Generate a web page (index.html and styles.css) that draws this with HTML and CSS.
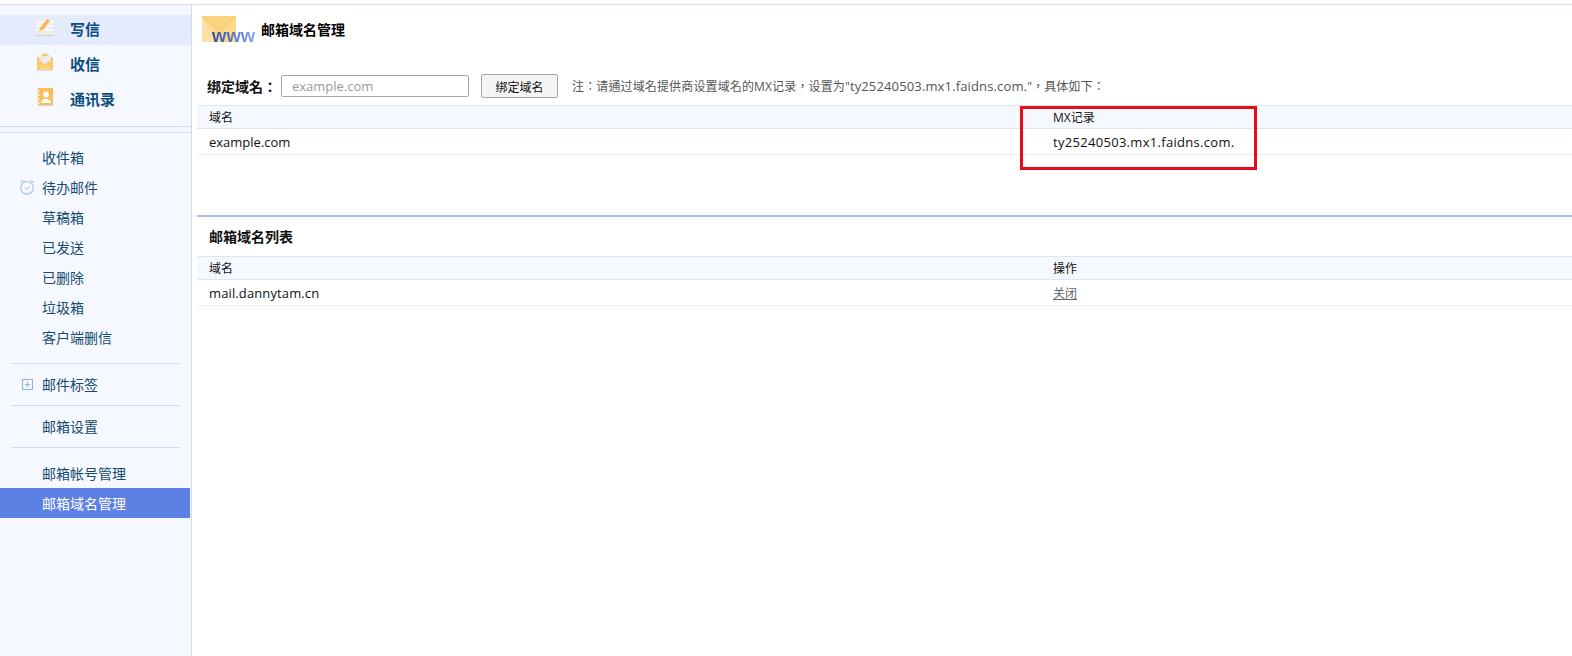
FILE: index.html
```html
<!DOCTYPE html>
<html lang="zh-CN">
<head>
<meta charset="utf-8">
<title>邮箱域名管理</title>
<link rel="stylesheet" href="styles.css">
</head>
<body>
<div class="app">
  <aside class="side">
    <nav class="main-nav">
      <a class="main-item current">
        <svg class="main-icon" viewBox="0 0 20 20"><rect x="1" y="1" width="18" height="18" fill="#ececec"/><path d="M1 5h18M1 9h18M1 13h18" stroke="#f8f8f8" stroke-width="2"/><rect x="1" y="18" width="18" height="1" fill="#cfcfcf"/><path d="M5 11l7-9 3 2-7 9-4 1z" fill="#f5b85a"/></svg>
        <span>写信</span>
      </a>
      <a class="main-item">
        <svg class="main-icon" viewBox="0 0 20 20"><path d="M2 6l8-5 8 5v12H2z" fill="#fdc765"/><path d="M4 9V4h12v5l-6 4z" fill="#ececf0"/><path d="M2 6l8 7 8-7" fill="none" stroke="#f2b14e" stroke-width=".7"/><path d="M2 18l8-6 8 6" fill="#fbd48a"/><rect x="2" y="18" width="16" height="1" fill="#d5d9e4"/></svg>
        <span>收信</span>
      </a>
      <a class="main-item">
        <svg class="main-icon" viewBox="0 0 20 20"><rect x="3" y="1" width="15" height="18" fill="#fdbd55"/><rect x="3" y="18" width="15" height="1.200" fill="#d5d9e4"/><path d="M2 4h3M2 8h3M2 12h3M2 16h3" stroke="#f0ecdf" stroke-width="1.500"/><circle cx="11" cy="7.500" r="3" fill="#fff"/><path d="M6 16c0-3 2-4 5-4s5 1 5 4z" fill="#fff"/></svg>
        <span>通讯录</span>
      </a>
    </nav>
    <div class="double-rule"></div>
    <ul class="folder-list">
      <li class="folder">收件箱</li>
      <li class="folder">
        <svg class="folder-icon" viewBox="0 0 16 16"><circle cx="8" cy="8.800" r="6.300" fill="none" stroke="#a9c1e8" stroke-width="1.200"/><path d="M5.500 8.800l2 2 3-3.500" fill="none" stroke="#a9c1e8"/><path d="M1.500 3.500L4 1.500M14.500 3.500L12 1.500" stroke="#a9c1e8" stroke-width="1.200"/></svg>
        待办邮件
      </li>
      <li class="folder">草稿箱</li>
      <li class="folder">已发送</li>
      <li class="folder">已删除</li>
      <li class="folder">垃圾箱</li>
      <li class="folder">客户端删信</li>
    </ul>
    <div class="side-rule rule-a"></div>
    <div class="folder tall">
      <svg class="folder-icon plus" viewBox="0 0 11 11"><rect x=".5" y=".5" width="10" height="10" fill="none" stroke="#8fb0e0"/><path d="M3 5.500h5M5.500 3v5" stroke="#8fb0e0"/></svg>
      邮件标签
    </div>
    <div class="side-rule"></div>
    <div class="folder tall">邮箱设置</div>
    <div class="side-rule"></div>
    <ul class="folder-list admin">
      <li class="folder">邮箱帐号管理</li>
      <li class="folder active">邮箱域名管理</li>
    </ul>
  </aside>
  <main class="content">
    <header class="page-head">
      <div class="logo">
        <svg class="logo-env" viewBox="0 0 34 26"><rect width="34" height="26" fill="#fdd98c"/><path d="M0 0l17 15L34 0" fill="#fcd27e" stroke="#efc474"/><path d="M0 0v26h14z" fill="#fde0a8"/></svg>
        <span class="logo-www">www</span>
      </div>
      <h1 class="page-title">邮箱域名管理</h1>
    </header>
    <form class="bind-row">
      <label class="bind-label" lang="zh-TW">绑定域名：</label>
      <input class="bind-input" type="text" placeholder="example.com">
      <button class="bind-btn" type="button">绑定域名</button>
      <span class="bind-note" lang="zh-TW">注：请通过域名提供商设置域名的MX记录，设置为"<span class="note-domain">ty25240503.mx1.faidns.com.</span>"，具体如下：</span>
    </form>
    <div class="table">
      <div class="row head"><span class="c1">域名</span><span class="c2">MX记录</span></div>
      <div class="row"><span class="c1">example.com</span><span class="c2 value">ty25240503.mx1.faidns.com.</span></div>
    </div>
    <div class="section-rule"></div>
    <h2 class="section-title">邮箱域名列表</h2>
    <div class="table">
      <div class="row head"><span class="c1">域名</span><span class="c2">操作</span></div>
      <div class="row"><span class="c1 value">mail.dannytam.cn</span><span class="c2"><a class="link">关闭</a></span></div>
    </div>
  </main>
  <div class="red-box"></div>
</div>
</body>
</html>
```
FILE: styles.css
```css
* { box-sizing: border-box; }
html, body { margin: 0; height: 100%; background: #fff; overflow: hidden; }
body { font-family: "Open Sans", "Noto Sans CJK SC", sans-serif; font-size: 13px; color: #111; padding-top: 4px; }
.app { position: relative; display: flex; height: 652px; border-top: 1px solid #cfdcf8; }
.side { width: 192px; flex: none; background: #f5f8ff; border-right: 1px solid #cfdcf8; padding-top: 10px; color: #0d4a78; }
.main-item { display: flex; align-items: center; height: 30px; margin-bottom: 5px; font-size: 15px; font-weight: 700; padding-left: 35px; gap: 15px; color: #0c4d80; }
.main-item span { margin-top: -4px; }
.main-item.current { background: #e4ebfd; }
.main-icon { width: 20px; height: 20px; flex: none; margin-top: -6px; }
.double-rule { height: 7px; margin-top: 11px; border-top: 1px solid #cfdcf8; border-bottom: 1px solid #cfdcf8; }
.folder-list { list-style: none; margin: 9px 0 0; padding: 0; }
.folder { position: relative; display: flex; align-items: center; height: 30px; padding-left: 42px; font-size: 14px; color: #174a70; width: 190px; }
.folder.tall { height: 41px; padding-bottom: 2px; }
.folder-icon { position: absolute; left: 19px; top: 7px; width: 16px; height: 16px; }
.folder-icon.plus { left: 22px; top: 15px; width: 11px; height: 11px; }
.side-rule { height: 1px; margin: 0 11px; background: #cfdcf1; width: 169px; }
.rule-a { margin-top: 11px; }
.admin { margin: 10px 0 0; }
.folder.active { background: #5c80e3; color: #fff; width: 190px; }
.content { flex: 1; min-width: 0; padding-left: 5px; }
.page-head { display: flex; align-items: center; height: 53px; padding-left: 5px; }
.page-title { margin: -5px 0 0 7px; font-size: 14px; font-weight: 700; color: #000; }
.logo { position: relative; width: 52px; height: 30px; margin-top: -3px; }
.logo-env { position: absolute; left: 0; top: 1px; width: 34px; height: 26px; }
.logo-www { position: absolute; left: 10px; top: 11px; font: 700 18.500px/19px "Liberation Sans", sans-serif; background: linear-gradient(90deg, #3450a5, #83a5f2); -webkit-background-clip: text; background-clip: text; color: transparent; }
.bind-row { display: flex; align-items: center; height: 47px; padding: 9px 0 0 10px; }
.bind-label { font-family: "Noto Sans CJK TC", sans-serif; font-size: 14px; font-weight: 700; color: #111; width: 74px; flex: none; }
.bind-input { width: 188px; height: 22px; border: 1px solid #a5a5a5; border-radius: 2px; padding: 0 10px; font: 13px "Open Sans", sans-serif; background: #fff; margin-top: -1px; }
.bind-input::placeholder { color: #999; opacity: 1; }
.bind-btn { width: 77px; height: 24px; margin-left: 12px; border: 1px solid #a5a5a5; border-radius: 2px; background: #f4f4f4; font: 12px "Noto Sans CJK SC", sans-serif; color: #111; padding: 0; }
.bind-note { margin-left: 14px; font-family: "Open Sans", "Noto Sans CJK TC", sans-serif; font-size: 12px; color: #555; white-space: nowrap; letter-spacing: .14px; }
.note-domain { font-size: 13px; }
.table { font-size: 13px; }
.row { display: flex; align-items: center; height: 26px; border-bottom: 1px solid #e8eefc; color: #111; }
.row.head { height: 24px; background: #f5f8ff; border-top: 1px solid #dbe5f8; border-bottom: 1px solid #dbe5f8; font-size: 12px; }
.c1 { width: 856px; padding-left: 12px; flex: none; }
.c2 { flex: 1; }
.value { letter-spacing: .3px; }
.c1.value { letter-spacing: .12px; }
.link { color: #666; text-decoration: underline; font-size: 12px; }
.section-rule { height: 2px; margin-top: 60px; background: #a8c0ec; }
.section-title { margin: 0; height: 39px; display: flex; align-items: center; padding: 0 0 2px 12px; font-size: 14px; font-weight: 700; color: #111; }
.red-box { position: absolute; left: 1020px; top: 101px; width: 237px; height: 64px; border: 3px solid #e60d1a; }
```
